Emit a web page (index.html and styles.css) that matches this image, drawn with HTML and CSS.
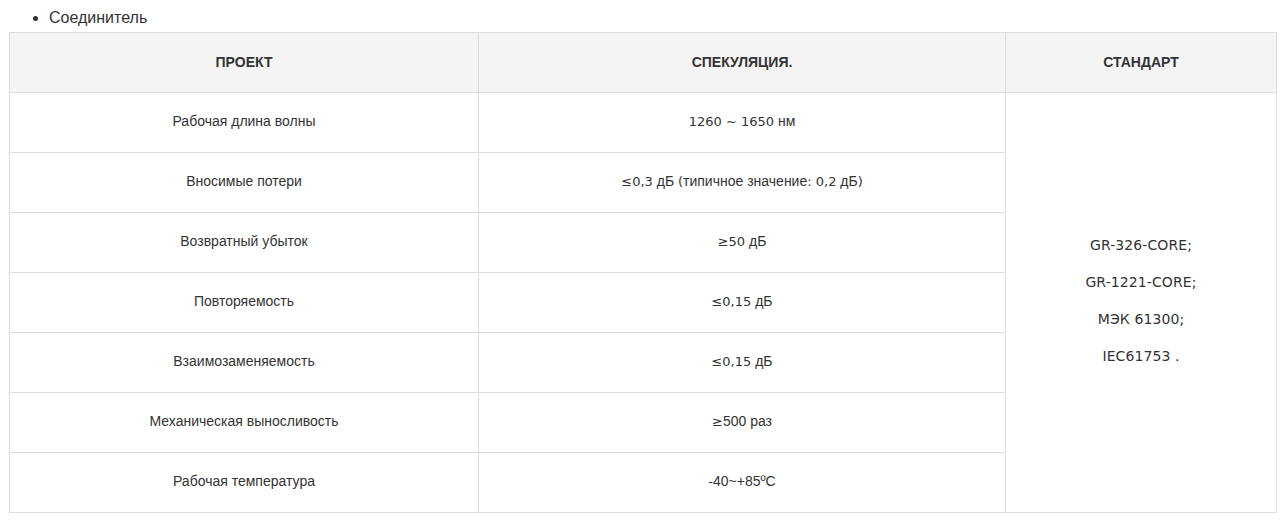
FILE: index.html
```html
<!DOCTYPE html>
<html lang="ru">
<head>
<meta charset="utf-8">
<title>Соединитель</title>
<link rel="stylesheet" href="styles.css">
</head>
<body>
<ul class="list">
  <li>Соединитель</li>
</ul>
<table class="spec">
  <colgroup>
    <col class="c1"><col class="c2"><col class="c3">
  </colgroup>
  <thead>
    <tr><th>ПРОЕКТ</th><th>СПЕКУЛЯЦИЯ.</th><th>СТАНДАРТ</th></tr>
  </thead>
  <tbody>
    <tr>
      <td>Рабочая длина волны</td>
      <td><span class="pp">1260 ~ 1650</span> нм</td>
      <td rowspan="7" class="std">
        <p>GR-326-CORE;</p>
        <p>GR-1221-CORE;</p>
        <p>МЭК 61300;</p>
        <p>IEC61753 .</p>
      </td>
    </tr>
    <tr><td>Вносимые потери</td><td><span class="pp">≤0,3</span> дБ <span class="pp">(</span>типичное значение<span class="pp">: 0,2</span> дБ<span class="pp">)</span></td></tr>
    <tr><td>Возвратный убыток</td><td><span class="pp">≥50</span> дБ</td></tr>
    <tr><td>Повторяемость</td><td><span class="pp">≤0,15</span> дБ</td></tr>
    <tr><td>Взаимозаменяемость</td><td><span class="pp">≤0,15</span> дБ</td></tr>
    <tr><td>Механическая выносливость</td><td><span class="pp">≥</span>500 раз</td></tr>
    <tr><td>Рабочая температура</td><td><span class="pp">-</span>40~+85ºC</td></tr>
  </tbody>
</table>
</body>
</html>
```
FILE: styles.css
```css
html, body {
  margin: 0;
  padding: 0;
  background: #fff;
}
body {
  font-family: "Liberation Sans", Arial, sans-serif;
  color: #333;
}
.list {
  margin: 0;
  padding: 6px 0 0 49px;
  font-size: 16px;
  line-height: 24px;
}
.spec {
  margin: 2px 0 0 9px;
  width: 1267px;
  border-collapse: collapse;
  table-layout: fixed;
  font-size: 14px;
}
.c1 { width: 469px; }
.c2 { width: 527px; }
.c3 { width: 271px; }
.spec th,
.spec td {
  border: 1px solid #dddddd;
  text-align: center;
  vertical-align: middle;
  padding: 0 8px 3px;
}
.spec th {
  background: #f4f4f4;
  font-size: 14px;
  font-weight: bold;
  color: #333;
  padding-bottom: 2px;
  height: 57px;
}
.spec td {
  height: 56px;
  color: #333;
}
.pp {
  font-family: "DejaVu Sans", "Liberation Sans", sans-serif;
  font-size: 13px;
}
.std p {
  margin: 0;
  line-height: 37px;
  font-family: "DejaVu Sans", "Liberation Sans", sans-serif;
  font-size: 14px;
  letter-spacing: 0.1px;
}
```
